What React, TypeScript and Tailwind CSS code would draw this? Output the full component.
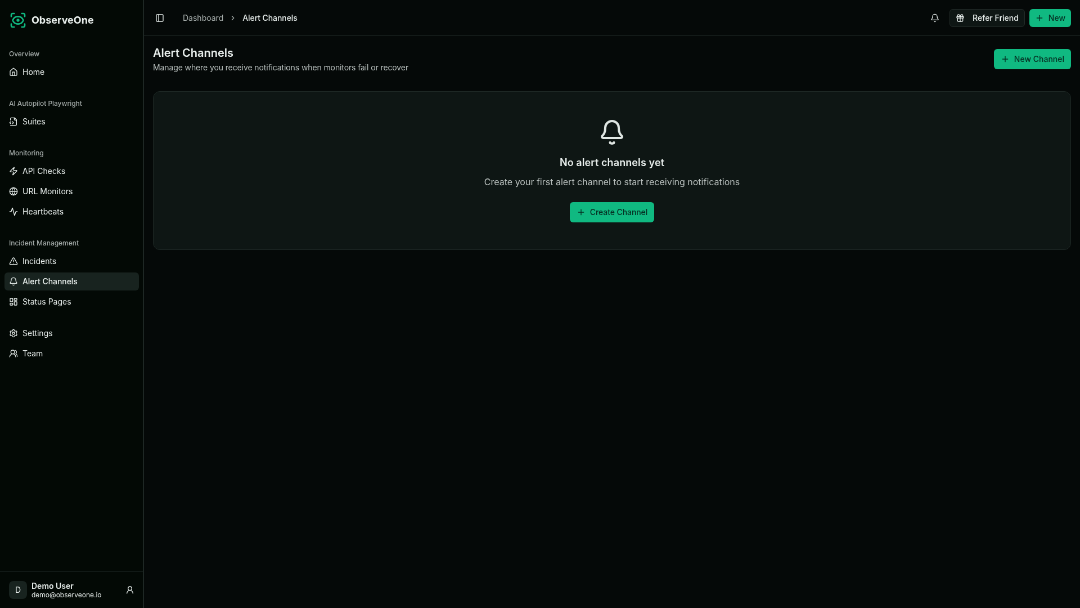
import {
  Activity,
  Bell,
  ChevronRight,
  Gift,
  Globe,
  House,
  LayoutDashboard,
  PanelLeft,
  Plus,
  ScanEye,
  Settings,
  TriangleAlert,
  UserRound,
  UsersRound,
  Zap,
} from "lucide-react";
import clsx from "clsx";
import type { ComponentType } from "react";

type NavItem = {
  title: string;
  icon: ComponentType<{ className?: string }>;
  active?: boolean;
};
type NavGroup = { label?: string; items: NavItem[] };

function SuiteIcon({ className }: { className?: string }) {
  return (
    <svg
      className={className}
      viewBox="0 0 24 24"
      fill="none"
      stroke="currentColor"
      strokeWidth="2"
      strokeLinecap="round"
      strokeLinejoin="round"
    >
      <path d="M4 22h14a2 2 0 0 0 2-2V7l-5-5H6a2 2 0 0 0-2 2v4" />
      <path d="M14 2v4a2 2 0 0 0 2 2h4" />
      <path d="m5 12-3 3 3 3" />
      <path d="m9 18 3-3-3-3" />
    </svg>
  );
}

const groups: NavGroup[] = [
  { label: "Overview", items: [{ title: "Home", icon: House }] },
  {
    label: "AI Autopilot Playwright",
    items: [{ title: "Suites", icon: SuiteIcon }],
  },
  {
    label: "Monitoring",
    items: [
      { title: "API Checks", icon: Zap },
      { title: "URL Monitors", icon: Globe },
      { title: "Heartbeats", icon: Activity },
    ],
  },
  {
    label: "Incident Management",
    items: [
      { title: "Incidents", icon: TriangleAlert },
      { title: "Alert Channels", icon: Bell, active: true },
      { title: "Status Pages", icon: LayoutDashboard },
    ],
  },
  {
    items: [
      { title: "Settings", icon: Settings },
      { title: "Team", icon: UsersRound },
    ],
  },
];

function Sidebar() {
  return (
    <aside className="flex w-64 shrink-0 flex-col border-r border-[#1e2724] bg-[#030905]">
      <div className="flex h-[72px] items-center gap-2 px-4">
        <ScanEye className="size-8 text-[#10b981]" />
        <span className="text-lg font-bold text-[#e8eeec]">ObserveOne</span>
      </div>

      <nav className="flex flex-1 flex-col gap-2">
        {groups.map((group, i) => (
          <div key={i} className="p-2">
            {group.label && (
              <div className="flex h-8 items-center px-2 text-xs font-medium tracking-[-0.04px] text-[#a3aaa8]">
                {group.label}
              </div>
            )}
            <ul className="flex flex-col gap-1">
              {group.items.map(({ title, icon: Icon, active }) => (
                <li key={title}>
                  <a
                    href="#"
                    className={clsx(
                      "flex h-8 items-center gap-2 rounded-md px-2 text-sm text-[#e8eeec]",
                      active
                        ? "bg-[#18231f] font-medium tracking-[-0.06px]"
                        : "font-normal",
                    )}
                  >
                    <Icon className="size-4" />
                    <span>{title}</span>
                  </a>
                </li>
              ))}
            </ul>
          </div>
        ))}
      </nav>

      <div className="flex h-[65px] items-center gap-2 border-t border-[#18211e] px-4">
        <div className="flex size-8 items-center justify-center rounded-lg bg-[#18231f] text-sm text-[#e8eeec]">
          D
        </div>
        <div className="flex flex-1 flex-col text-[#e8eeec]">
          <span className="text-sm leading-[17px] font-semibold">Demo User</span>
          <span className="text-xs leading-4">demo@observeone.io</span>
        </div>
        <UserRound className="size-4 text-[#e8eeec]" />
      </div>
    </aside>
  );
}

function Header() {
  return (
    <header className="flex h-16 shrink-0 items-center border-b border-[#1e2724] pt-px pr-4 pl-5 text-sm">
      <button className="mr-[33px]">
        <PanelLeft className="size-4 text-[#e8eeec]" />
      </button>
      <nav className="flex flex-1 items-center gap-2.5">
        <span className="text-[#a9b0ae]">Dashboard</span>
        <ChevronRight className="size-3.5 text-[#a9b0ae]" />
        <span className="font-medium tracking-[-0.08px] text-[#e8eeec]">
          Alert Channels
        </span>
      </nav>
      <div className="flex items-center gap-2 font-medium">
        <button className="flex size-9 items-center justify-center">
          <Bell className="size-4 text-[#e8eeec]" />
        </button>
        <button className="flex h-8 items-center gap-3.5 rounded-md border border-[#222b28] bg-[#0e1614] px-2.5 text-[#e8eeec]">
          <Gift className="size-4" />
          Refer Friend
        </button>
        <button className="flex h-8 items-center gap-2 rounded-md bg-[#10b981] px-2.5 text-[#062e22]">
          <Plus className="size-4" />
          New
        </button>
      </div>
    </header>
  );
}

function PrimaryButton({
  children,
  className,
}: {
  children: string;
  className?: string;
}) {
  return (
    <button
      className={clsx(
        "flex h-9 items-center gap-2 rounded-md bg-[#10b981] px-3 text-sm font-medium text-[#062e22]",
        className,
      )}
    >
      <Plus className="size-4" />
      {children}
    </button>
  );
}

function EmptyState() {
  return (
    <section className="flex flex-col items-center rounded-xl border border-[#1e2825] bg-[#0e1614] py-12">
      <Bell className="size-12 text-[#dfe6e3]" />
      <h2 className="mt-4 text-lg font-semibold tracking-[0.1px] text-[#e8eeec]">
        No alert channels yet
      </h2>
      <p className="mt-2 mb-6 text-base text-[#b9c0be]">
        Create your first alert channel to start receiving notifications
      </p>
      <PrimaryButton className="tracking-[-0.08px]">
        Create Channel
      </PrimaryButton>
    </section>
  );
}

export default function App() {
  return (
    <div className="h-screen overflow-hidden bg-[#050908]">
      <div className="flex h-[1080px] w-[1920px] origin-top-left scale-x-[0.5625] scale-y-[0.56296] bg-[#050908] font-['Inter',sans-serif] will-change-transform">
        <Sidebar />
        <div className="flex flex-1 flex-col">
          <Header />
          <main className="flex flex-col gap-8 px-4 pt-4">
            <div className="flex items-center justify-between">
              <div>
                <h1 className="text-xl font-semibold text-[#e8eeec]">
                  Alert Channels
                </h1>
                <p className="mt-0.5 text-sm tracking-[-0.11px] text-[#b9c0be]">
                  Manage where you receive notifications when monitors fail or
                  recover
                </p>
              </div>
              <PrimaryButton>New Channel</PrimaryButton>
            </div>
            <EmptyState />
          </main>
        </div>
      </div>
    </div>
  );
}
